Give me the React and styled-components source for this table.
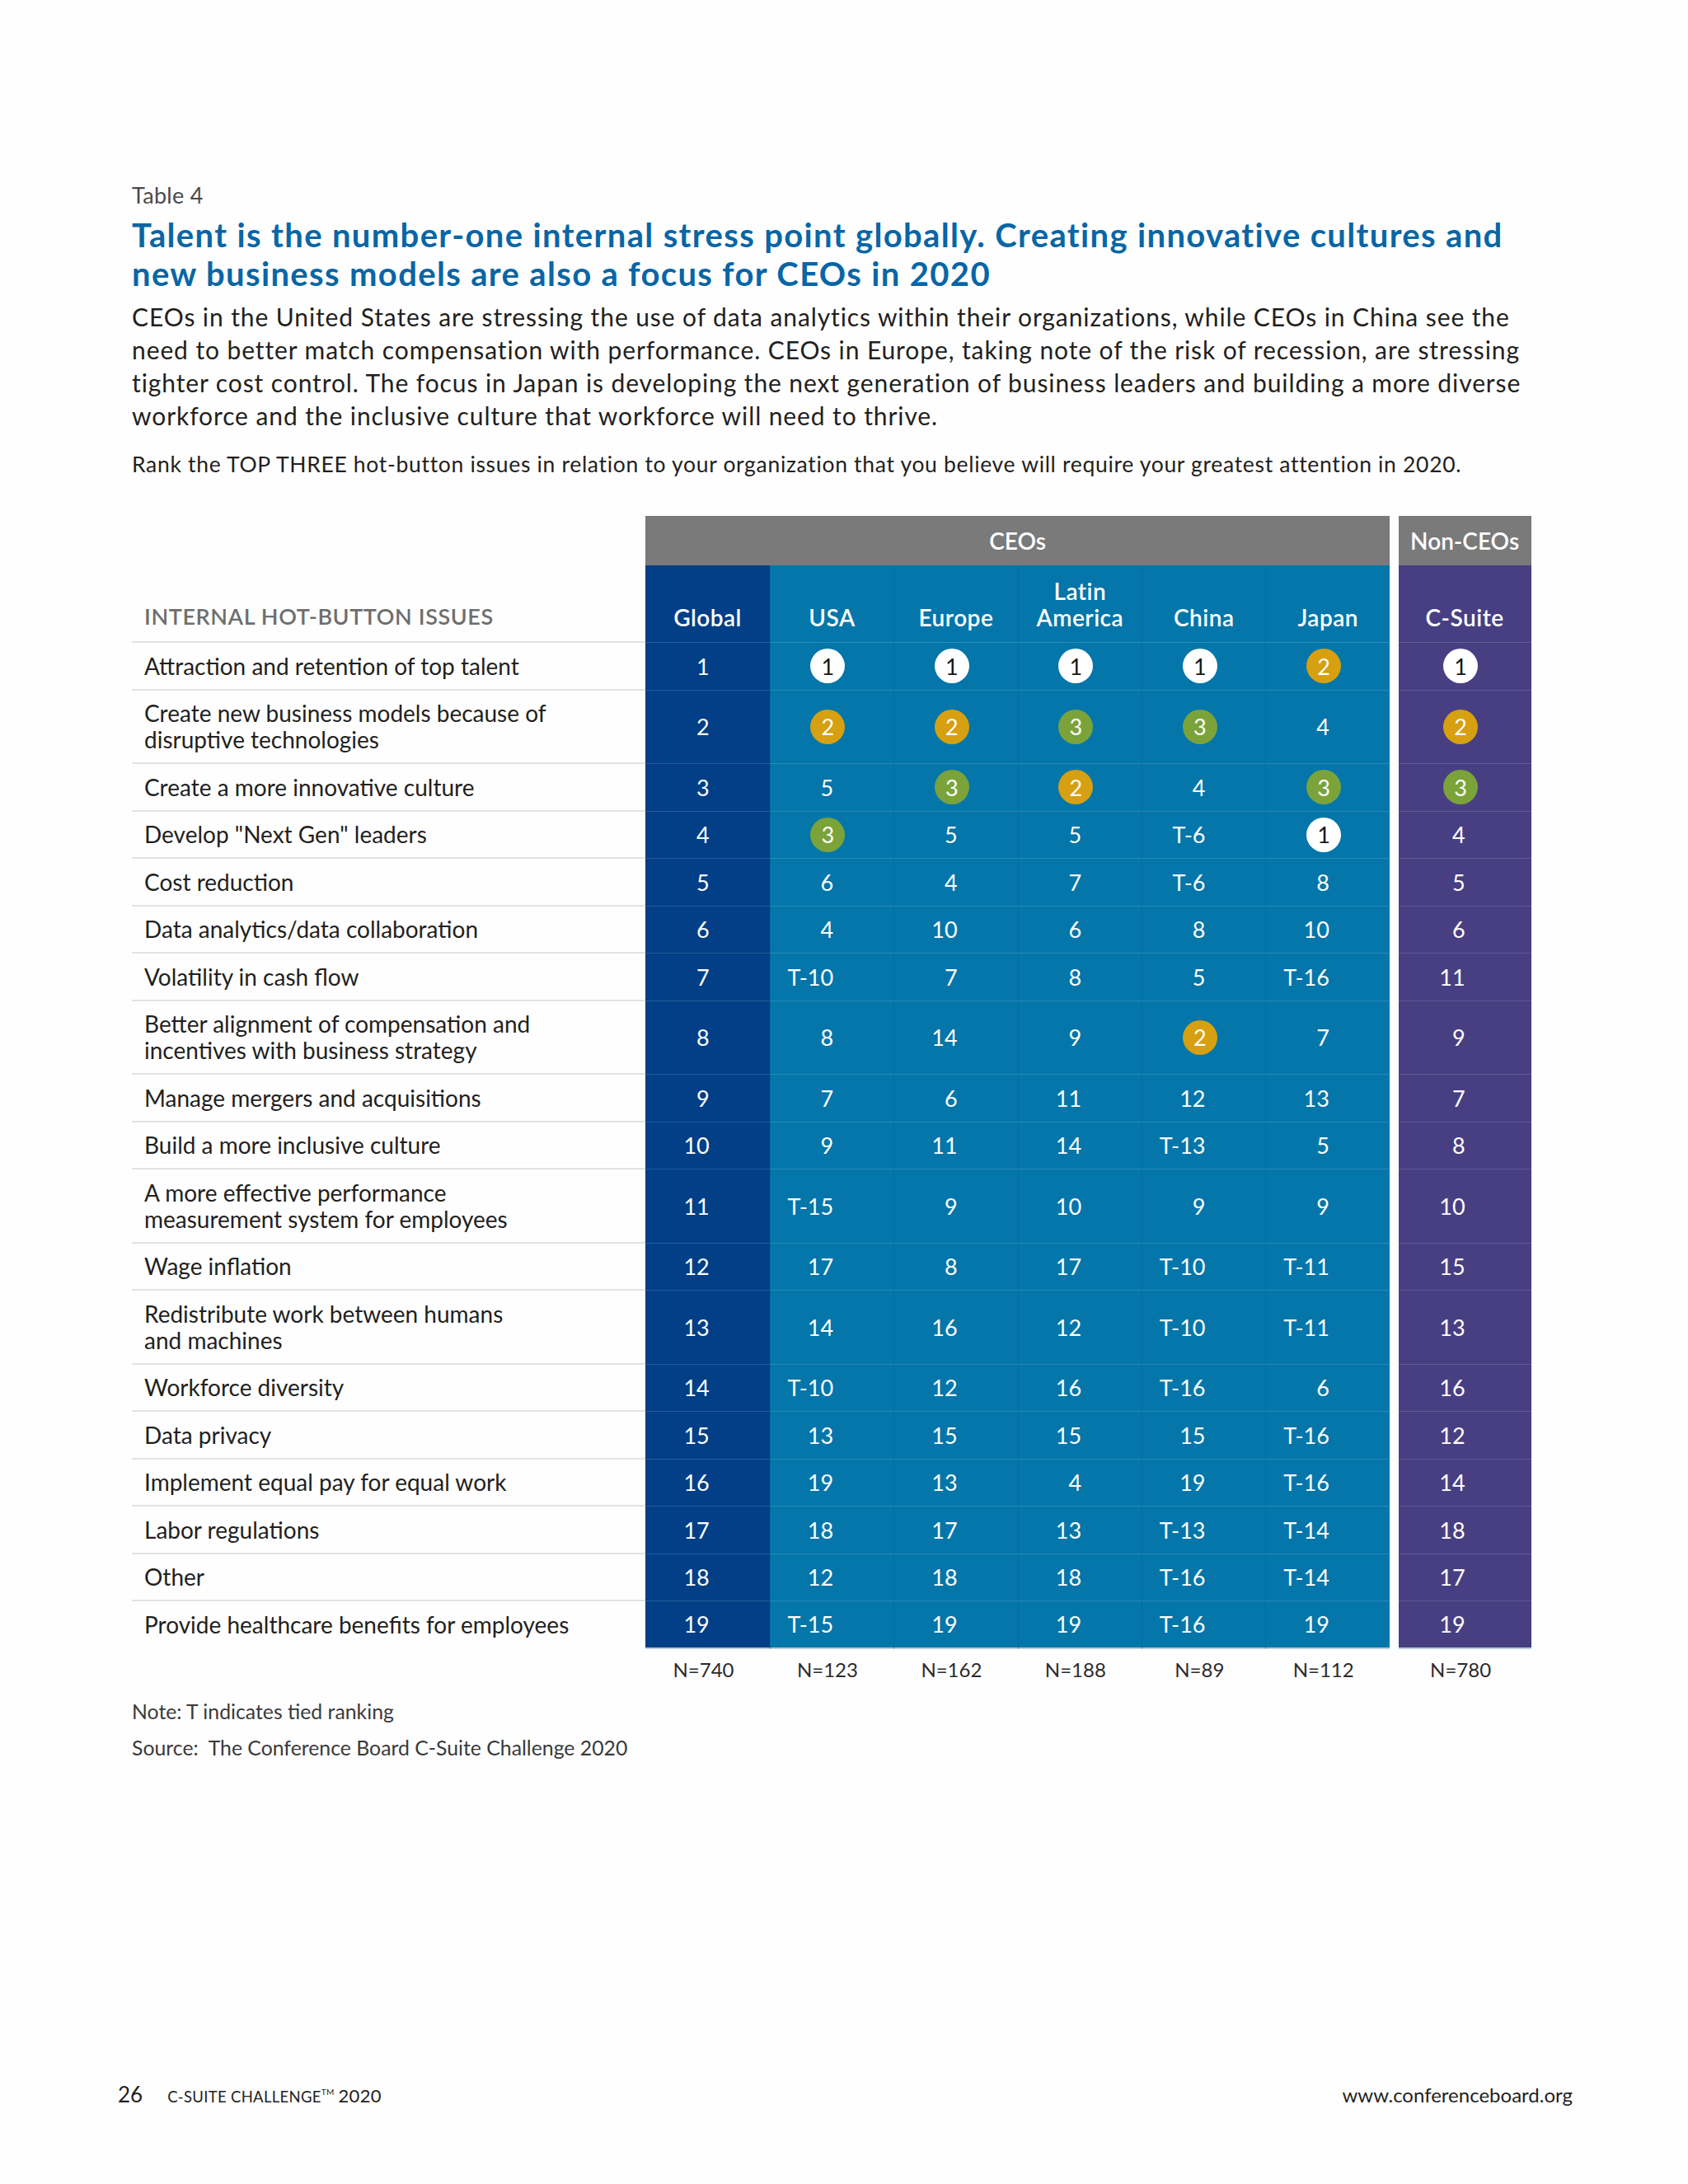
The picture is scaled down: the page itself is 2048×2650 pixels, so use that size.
import React from 'react';
import styled, { createGlobalStyle } from 'styled-components';

const GlobalStyle = createGlobalStyle`
  html, body {
    margin: 0;
    padding: 0;
    background: #fefefe;
  }
  body {
    font-family: Lato, "Open Sans", sans-serif;
    color: #231f20;
  }
`;

const tones = {
  navy: '#023f87',
  blue: '#0476aa',
  purple: '#483f83',
};

const badgeColors = {
  1: { bg: '#ffffff', fg: '#161616' },
  2: { bg: '#d6a010', fg: '#ffffff' },
  3: { bg: '#7ba33a', fg: '#ffffff' },
};

// right padding puts the right edge of plain values at the column centre
const columns = [
  { label: ['Global'], tone: 'navy', n: 'N=740', badge: false, inset: 73 },
  { label: ['USA'], tone: 'blue', n: 'N=123', badge: true, inset: 73 },
  { label: ['Europe'], tone: 'blue', n: 'N=162', badge: true, inset: 73 },
  { label: ['Latin', 'America'], tone: 'blue', n: 'N=188', badge: true, inset: 73 },
  { label: ['China'], tone: 'blue', n: 'N=89', badge: true, inset: 73 },
  { label: ['Japan'], tone: 'blue', n: 'N=112', badge: true, inset: 73 },
];

const suite = { label: ['C-Suite'], tone: 'purple', n: 'N=780', badge: true, inset: 80 };

const issues = [
  { label: ['Attraction and retention of top talent'], ranks: ['1', '1', '1', '1', '1', '2', '1'] },
  { label: ['Create new business models because of', 'disruptive technologies'], ranks: ['2', '2', '2', '3', '3', '4', '2'] },
  { label: ['Create a more innovative culture'], ranks: ['3', '5', '3', '2', '4', '3', '3'] },
  { label: ['Develop "Next Gen" leaders'], ranks: ['4', '3', '5', '5', 'T-6', '1', '4'] },
  { label: ['Cost reduction'], ranks: ['5', '6', '4', '7', 'T-6', '8', '5'] },
  { label: ['Data analytics/data collaboration'], ranks: ['6', '4', '10', '6', '8', '10', '6'] },
  { label: ['Volatility in cash flow'], ranks: ['7', 'T-10', '7', '8', '5', 'T-16', '11'] },
  { label: ['Better alignment of compensation and', 'incentives with business strategy'], ranks: ['8', '8', '14', '9', '2', '7', '9'] },
  { label: ['Manage mergers and acquisitions'], ranks: ['9', '7', '6', '11', '12', '13', '7'] },
  { label: ['Build a more inclusive culture'], ranks: ['10', '9', '11', '14', 'T-13', '5', '8'] },
  { label: ['A more effective performance', 'measurement system for employees'], ranks: ['11', 'T-15', '9', '10', '9', '9', '10'] },
  { label: ['Wage inflation'], ranks: ['12', '17', '8', '17', 'T-10', 'T-11', '15'] },
  { label: ['Redistribute work between humans', 'and machines'], ranks: ['13', '14', '16', '12', 'T-10', 'T-11', '13'] },
  { label: ['Workforce diversity'], ranks: ['14', 'T-10', '12', '16', 'T-16', '6', '16'] },
  { label: ['Data privacy'], ranks: ['15', '13', '15', '15', '15', 'T-16', '12'] },
  { label: ['Implement equal pay for equal work'], ranks: ['16', '19', '13', '4', '19', 'T-16', '14'] },
  { label: ['Labor regulations'], ranks: ['17', '18', '17', '13', 'T-13', 'T-14', '18'] },
  { label: ['Other'], ranks: ['18', '12', '18', '18', 'T-16', 'T-14', '17'] },
  { label: ['Provide healthcare benefits for employees'], ranks: ['19', 'T-15', '19', '19', 'T-16', '19', '19'] },
];

const Lines = ({ lines }) =>
  lines.map((line, i) => (
    <React.Fragment key={i}>
      {i > 0 && <br />}
      {line}
    </React.Fragment>
  ));

const Rank = ({ col, value, divider, last }) => {
  const circled = col.badge && badgeColors[value];
  return (
    <RankCell
      $tone={col.tone}
      $divider={divider}
      $last={last}
      $circled={circled}
      $inset={col.inset}
    >
      {circled ? <Badge $rank={value}>{value}</Badge> : <span>{value}</span>}
    </RankCell>
  );
};

const App = () => {
  return (
    <Page>
      <GlobalStyle />
      <Content>
        <Caption>Table 4</Caption>
        <Title>
          Talent is the number-one internal stress point globally. Creating innovative cultures and
          <br />
          new business models are also a focus for CEOs in 2020
        </Title>
        <Lead>
          CEOs in the United States are stressing the use of data analytics within their organizations, while CEOs in China see the
          <br />
          need to better match compensation with performance. CEOs in Europe, taking note of the risk of recession, are stressing
          <br />
          tighter cost control. The focus in Japan is developing the next generation of business leaders and building a more diverse
          <br />
          workforce and the inclusive culture that workforce will need to thrive.
        </Lead>
        <Prompt>
          Rank the TOP THREE hot-button issues in relation to your organization that you believe will require your greatest attention in 2020.
        </Prompt>

        <Table>
          <Blank />
          <Band $span="2 / span 6">CEOs</Band>
          <Gap />
          <Band $span="9 / span 1">Non-CEOs</Band>

          <IssueHead>INTERNAL HOT-BUTTON ISSUES</IssueHead>
          {columns.map((col, i) => (
            <ColHead key={i} $tone={col.tone} $divider={i > 0}>
              <Lines lines={col.label} />
            </ColHead>
          ))}
          <Gap />
          <ColHead $tone={suite.tone}>
            <Lines lines={suite.label} />
          </ColHead>

          {issues.map((issue, r) => {
            const last = r === issues.length - 1;
            return (
              <React.Fragment key={r}>
                <IssueCell $last={last}>
                  <Lines lines={issue.label} />
                </IssueCell>
                {columns.map((col, c) => (
                  <Rank key={c} col={col} value={issue.ranks[c]} divider={c > 0} last={last} />
                ))}
                <Gap />
                <Rank col={suite} value={issue.ranks[6]} last={last} />
              </React.Fragment>
            );
          })}

          <Blank />
          {columns.map((col, c) => (
            <CountCell key={c}>{col.n}</CountCell>
          ))}
          <Gap />
          <CountCell>{suite.n}</CountCell>
        </Table>

        <Notes>
          <div>Note: T indicates tied ranking</div>
          <div>Source:&nbsp; The Conference Board C-Suite Challenge 2020</div>
        </Notes>
      </Content>

      <Footer>
        <FooterLeft>
          <PageNum>26</PageNum>
          <Series>
            C-Suite Challenge<Tm>TM</Tm> <Year>2020</Year>
          </Series>
        </FooterLeft>
        <Url>www.conferenceboard.org</Url>
      </Footer>
    </Page>
  );
};

export default App;

const Page = styled.div`
  width: 2048px;
  min-height: 2650px;
  display: flex;
  flex-direction: column;
  box-sizing: border-box;
  padding-bottom: 91px;
`;

const Content = styled.div`
  padding: 221px 0 0 160px;
`;

const Caption = styled.div`
  font-size: 27px;
  line-height: 32px;
  letter-spacing: 0.3px;
  color: #4a4a4a;
`;

const Title = styled.h1`
  margin: 9px 0 0;
  font-size: 40px;
  line-height: 47px;
  font-weight: 700;
  letter-spacing: 1.35px;
  color: #0866a6;
  white-space: nowrap;
`;

const Lead = styled.p`
  margin: 8px 0 0;
  font-size: 30px;
  line-height: 40px;
  letter-spacing: 0.9px;
  color: #231f20;
  white-space: nowrap;
`;

const Prompt = styled.p`
  margin: 22px 0 0;
  font-size: 26.5px;
  line-height: 34px;
  letter-spacing: 0.68px;
  color: #231f20;
  white-space: nowrap;
`;

const Table = styled.div`
  display: grid;
  grid-template-columns: 623.3px repeat(6, 150.45px) 10.7px 161px;
  margin-top: 46px;
`;

const Blank = styled.div``;

const Gap = styled.div``;

const Band = styled.div`
  grid-column: ${(p) => p.$span};
  height: 60px;
  display: flex;
  align-items: center;
  justify-content: center;
  background: #7a7a7b;
  color: #ffffff;
  font-size: 28px;
  font-weight: 600;
`;

const IssueHead = styled.div`
  display: flex;
  align-items: flex-end;
  box-sizing: border-box;
  padding: 0 15px 14px;
  font-size: 27px;
  line-height: 32px;
  font-weight: 600;
  letter-spacing: 0.6px;
  color: #6e6e6e;
  border-bottom: 2px solid #e3e3e3;
`;

const ColHead = styled.div`
  min-height: 94px;
  box-sizing: border-box;
  display: flex;
  flex-direction: column;
  justify-content: flex-end;
  padding-bottom: 14px;
  text-align: center;
  font-size: 28px;
  line-height: 32px;
  font-weight: 600;
  letter-spacing: 0.5px;
  color: #ffffff;
  background: ${(p) => tones[p.$tone]};
  border-bottom: 1px solid rgba(255, 255, 255, 0.16);
  border-left: ${(p) => (p.$divider ? '1px solid rgba(0, 0, 0, 0.07)' : 'none')};
`;

const IssueCell = styled.div`
  padding: 11.75px 15px;
  font-size: 28px;
  line-height: 32px;
  color: #231f20;
  border-bottom: ${(p) => (p.$last ? '2px solid transparent' : '2px solid #e3e3e3')};
`;

const RankCell = styled.div`
  display: flex;
  align-items: center;
  justify-content: ${(p) => (p.$circled ? 'center' : 'flex-end')};
  padding-right: ${(p) => (p.$circled ? '10px' : `${p.$inset}px`)};
  font-size: 27px;
  color: #ffffff;
  background: ${(p) => tones[p.$tone]};
  border-bottom: ${(p) => (p.$last ? '2px solid #b9cde0' : '1px solid rgba(255, 255, 255, 0.14)')};
  border-left: ${(p) => (p.$divider ? '1px solid rgba(0, 0, 0, 0.07)' : 'none')};
`;

const Badge = styled.span`
  width: 42px;
  height: 42px;
  border-radius: 50%;
  display: flex;
  align-items: center;
  justify-content: center;
  font-size: 27px;
  background: ${(p) => badgeColors[p.$rank].bg};
  color: ${(p) => badgeColors[p.$rank].fg};
`;

const CountCell = styled.div`
  padding: 10px 10px 0 0;
  text-align: center;
  font-size: 24px;
  line-height: 30px;
  color: #2b2b2b;
`;

const Notes = styled.div`
  margin-top: 14px;
  font-size: 24.8px;
  line-height: 44px;
  color: #3a3a3a;
`;

const Footer = styled.div`
  margin-top: auto;
  display: flex;
  justify-content: space-between;
  align-items: baseline;
  padding: 0 140px 0 143px;
  line-height: 30px;
  color: #231f20;
`;

const FooterLeft = styled.div`
  display: flex;
  align-items: baseline;
  gap: 30px;
`;

const PageNum = styled.span`
  font-size: 26px;
`;

const Series = styled.span`
  font-size: 18.5px;
  text-transform: uppercase;
  letter-spacing: 0.3px;
`;

const Tm = styled.sup`
  font-size: 10px;
  vertical-align: 9px;
  line-height: 0;
`;

const Year = styled.span`
  font-size: 22px;
`;

const Url = styled.span`
  font-size: 24px;
`;
